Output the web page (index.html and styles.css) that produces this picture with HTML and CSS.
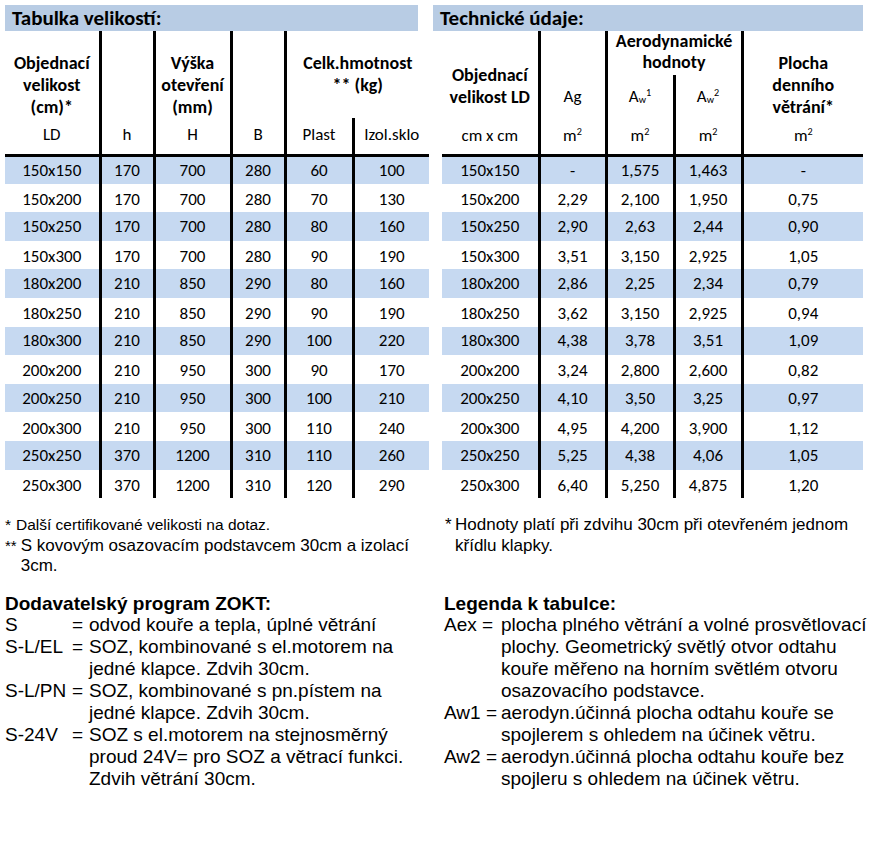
FILE: index.html
```html
<!DOCTYPE html>
<html lang="cs">
<head>
<meta charset="utf-8">
<title>Tabulka velikostí</title>
<link rel="stylesheet" href="styles.css">
</head>
<body>
<div class="page">
  <section class="panel panel-left">
    <h2 class="title title-left">Tabulka velikostí:</h2>
    <table class="tbl tbl-left">
      <colgroup>
        <col class="l1"><col class="l2"><col class="l3"><col class="l4"><col class="l5"><col class="l6">
      </colgroup>
      <thead>
        <tr class="lh1">
          <th class="bold top">Objednací<br>velikost<br>(cm)*</th>
          <th class="vl"></th>
          <th class="bold top vl">Výška<br>otevření<br>(mm)</th>
          <th class="vl"></th>
          <th class="bold top vl" colspan="2">Celk.hmotnost<br>** (kg)</th>
        </tr>
        <tr class="lh2">
          <th>LD</th><th class="vl">h</th><th class="vl">H</th><th class="vl">B</th><th class="vl">Plast</th><th class="vl">Izol.sklo</th>
        </tr>
      </thead>
      <tbody>
        <tr class="blue"><td>150x150</td><td>170</td><td>700</td><td>280</td><td>60</td><td>100</td></tr>
        <tr><td>150x200</td><td>170</td><td>700</td><td>280</td><td>70</td><td>130</td></tr>
        <tr class="blue"><td>150x250</td><td>170</td><td>700</td><td>280</td><td>80</td><td>160</td></tr>
        <tr><td>150x300</td><td>170</td><td>700</td><td>280</td><td>90</td><td>190</td></tr>
        <tr class="blue"><td>180x200</td><td>210</td><td>850</td><td>290</td><td>80</td><td>160</td></tr>
        <tr><td>180x250</td><td>210</td><td>850</td><td>290</td><td>90</td><td>190</td></tr>
        <tr class="blue"><td>180x300</td><td>210</td><td>850</td><td>290</td><td>100</td><td>220</td></tr>
        <tr><td>200x200</td><td>210</td><td>950</td><td>300</td><td>90</td><td>170</td></tr>
        <tr class="blue"><td>200x250</td><td>210</td><td>950</td><td>300</td><td>100</td><td>210</td></tr>
        <tr><td>200x300</td><td>210</td><td>950</td><td>300</td><td>110</td><td>240</td></tr>
        <tr class="blue"><td>250x250</td><td>370</td><td>1200</td><td>310</td><td>110</td><td>260</td></tr>
        <tr><td>250x300</td><td>370</td><td>1200</td><td>310</td><td>120</td><td>290</td></tr>
      </tbody>
    </table>
  </section>

  <section class="panel panel-right">
    <h2 class="title title-right">Technické údaje:</h2>
    <table class="tbl tbl-right">
      <colgroup>
        <col class="r1"><col class="r2"><col class="r3"><col class="r4"><col class="r5">
      </colgroup>
      <thead>
        <tr class="rha">
          <th rowspan="2" class="bold top r-obj">Objednací<br>velikost LD</th>
          <th rowspan="2" class="top vl r-ag">Ag</th>
          <th colspan="2" class="bold top vl r-aero">Aerodynamické<br>hodnoty</th>
          <th rowspan="2" class="bold top vl r-plocha">Plocha<br>denního<br>větrání*</th>
        </tr>
        <tr class="rhb">
          <th class="top vl r-aw">A<sub>w</sub><sup>1</sup></th>
          <th class="top vl r-aw">A<sub>w</sub><sup>2</sup></th>
        </tr>
        <tr class="rhc">
          <th>cm x cm</th>
          <th class="vl">m<sup>2</sup></th>
          <th class="vl">m<sup>2</sup></th>
          <th class="vl">m<sup>2</sup></th>
          <th class="vl">m<sup>2</sup></th>
        </tr>
      </thead>
      <tbody>
        <tr class="blue"><td>150x150</td><td>-</td><td>1,575</td><td>1,463</td><td>-</td></tr>
        <tr><td>150x200</td><td>2,29</td><td>2,100</td><td>1,950</td><td>0,75</td></tr>
        <tr class="blue"><td>150x250</td><td>2,90</td><td>2,63</td><td>2,44</td><td>0,90</td></tr>
        <tr><td>150x300</td><td>3,51</td><td>3,150</td><td>2,925</td><td>1,05</td></tr>
        <tr class="blue"><td>180x200</td><td>2,86</td><td>2,25</td><td>2,34</td><td>0,79</td></tr>
        <tr><td>180x250</td><td>3,62</td><td>3,150</td><td>2,925</td><td>0,94</td></tr>
        <tr class="blue"><td>180x300</td><td>4,38</td><td>3,78</td><td>3,51</td><td>1,09</td></tr>
        <tr><td>200x200</td><td>3,24</td><td>2,800</td><td>2,600</td><td>0,82</td></tr>
        <tr class="blue"><td>200x250</td><td>4,10</td><td>3,50</td><td>3,25</td><td>0,97</td></tr>
        <tr><td>200x300</td><td>4,95</td><td>4,200</td><td>3,900</td><td>1,12</td></tr>
        <tr class="blue"><td>250x250</td><td>5,25</td><td>4,38</td><td>4,06</td><td>1,05</td></tr>
        <tr><td>250x300</td><td>6,40</td><td>5,250</td><td>4,875</td><td>1,20</td></tr>
      </tbody>
    </table>
  </section>

  <div class="notes notes-left">
    <div class="note note-small"><span class="mark">*</span><span class="ntext">Další certifikované velikosti na dotaz.</span></div>
    <div class="note"><span class="mark mark-2">**</span><span class="ntext">S kovovým osazovacím podstavcem 30cm a izolací 3cm.</span></div>
  </div>
  <div class="notes notes-right">
    <div class="note"><span class="mark">*</span><span class="ntext">Hodnoty platí při zdvihu 30cm při otevřeném jednom křídlu klapky.</span></div>
  </div>

  <div class="legend legend-left">
    <h3 class="lhead">Dodavatelský program ZOKT:</h3>
    <div class="lrow"><span class="term">S</span><span class="eq">=</span><span class="def">odvod kouře a tepla, úplné větrání</span></div>
    <div class="lrow"><span class="term">S-L/EL</span><span class="eq">=</span><span class="def">SOZ, kombinované s el.motorem na jedné klapce. Zdvih 30cm.</span></div>
    <div class="lrow"><span class="term">S-L/PN</span><span class="eq">=</span><span class="def">SOZ, kombinované s pn.pístem na jedné klapce. Zdvih 30cm.</span></div>
    <div class="lrow"><span class="term">S-24V</span><span class="eq">=</span><span class="def">SOZ s el.motorem na stejnosměrný proud 24V= pro SOZ a větrací funkci. Zdvih větrání 30cm.</span></div>
  </div>
  <div class="legend legend-right">
    <h3 class="lhead">Legenda k tabulce:</h3>
    <div class="rrow"><span class="rterm">Aex =</span><span class="rdef">plocha plného větrání a volné prosvětlovací plochy. Geometrický světlý otvor odtahu kouře měřeno na horním světlém otvoru osazovacího podstavce.</span></div>
    <div class="rrow"><span class="rterm">Aw1 =</span><span class="rdef">aerodyn.účinná plocha odtahu kouře se spojlerem s ohledem na účinek větru.</span></div>
    <div class="rrow"><span class="rterm">Aw2 =</span><span class="rdef">aerodyn.účinná plocha odtahu kouře bez spojleru s ohledem na účinek větru.</span></div>
  </div>
</div>
</body>
</html>
```

FILE: styles.css
```css
* { box-sizing: border-box; }
html, body { margin: 0; padding: 0; background: #fff; }
body { color: #000; font-family: "Liberation Sans", Arial, sans-serif; }

.page {
  display: grid;
  grid-template-columns: 424px 437px;
  column-gap: 4px;
  padding: 5px 0 0 5px;
  width: 870px;
}

.panel { display: flex; flex-direction: column; }

.title {
  margin: 0;
  height: 26px;
  line-height: 27px;
  background: #b8cce4;
  font-family: "Carlito", "Lato", sans-serif;
  font-weight: 700;
  font-size: 21px;
  padding-left: 7px;
  color: #000;
}
.title-left { width: 413px; }
.title-right { width: 430px; }

.tbl {
  border-collapse: collapse;
  table-layout: fixed;
  font-family: "Carlito", "Lato", sans-serif;
  font-size: 17px;
  color: #000;
}
.tbl-left { width: 424px; }
.tbl-right { width: 421px; margin-left: 9px; }

.l1 { width: 95px; } .l2 { width: 54px; } .l3 { width: 77px; }
.l4 { width: 54px; } .l5 { width: 68px; } .l6 { width: 76px; }
.r1 { width: 97px; } .r2 { width: 67px; } .r3 { width: 68px; }
.r4 { width: 68px; } .r5 { width: 121px; }

.tbl th, .tbl td {
  padding: 0;
  text-align: center;
  white-space: nowrap;
  font-weight: 400;
}
.tbl th.bold { font-weight: 700; font-size: 18px; }
.tbl th.top { vertical-align: top; }
.tbl .vl { border-left: 3px solid #000; }
.tbl td + td { border-left: 3px solid #000; }

.tbl th { line-height: 22px; }

/* left header */
.lh1 { height: 87px; }
.lh1 th.top { padding-top: 21px; }
.lh2 { height: 37px; }
.lh2 th { border-bottom: 3px solid #000; vertical-align: middle; padding-bottom: 2px; }

/* right header */
.rha { height: 44px; }
.rhb { height: 43px; }
.rhc { height: 37px; }
.rhc th { border-bottom: 3px solid #000; vertical-align: middle; padding-bottom: 0; }
.r-obj { padding-top: 33px !important; }
.r-ag { padding-top: 55px !important; }
.r-aero { padding-top: 0; line-height: 21px !important; }
.r-plocha { padding-top: 21px !important; }
.r-aw { padding-top: 11px !important; }

.tbl sup { font-size: 0.6em; vertical-align: 0.6em; line-height: 0; }
.tbl sub { font-size: 0.6em; vertical-align: -0.1em; line-height: 0; }

.tbl tbody tr { height: 28.6px; }
.tbl tbody td { vertical-align: middle; line-height: 20px; padding-top: 4px; }
.tbl tbody tr.blue td { background: #c6d9f1; padding-top: 1px; }

/* notes */
.notes {
  font-size: 17px;
  line-height: 20.5px;
  margin-top: 17px;
}
.note { display: flex; }
.note-small { font-size: 15.5px; }
.mark { flex: 0 0 auto; min-width: 11px; white-space: nowrap; }
.mark-2 { font-size: 15px; padding-right: 4px; }
.ntext { flex: 1; }
.notes-left .note:nth-child(2) .ntext { padding-right: 4px; }
.notes-right { padding-left: 12px; padding-right: 4px; }
.notes-right .mark { min-width: 10px; }

/* legend */
.legend {
  margin-top: 17px;
  font-size: 19px;
  line-height: 22px;
}
.lhead {
  margin: 0;
  font-size: 19px;
  font-weight: 700;
  line-height: 20px;
}
.lrow { display: grid; grid-template-columns: 67px 17px 1fr; }
.legend-right { padding-left: 11px; }
.rrow { display: flex; }
.rterm { flex: 0 0 57px; white-space: nowrap; }
.rdef { flex: 1; }
```
